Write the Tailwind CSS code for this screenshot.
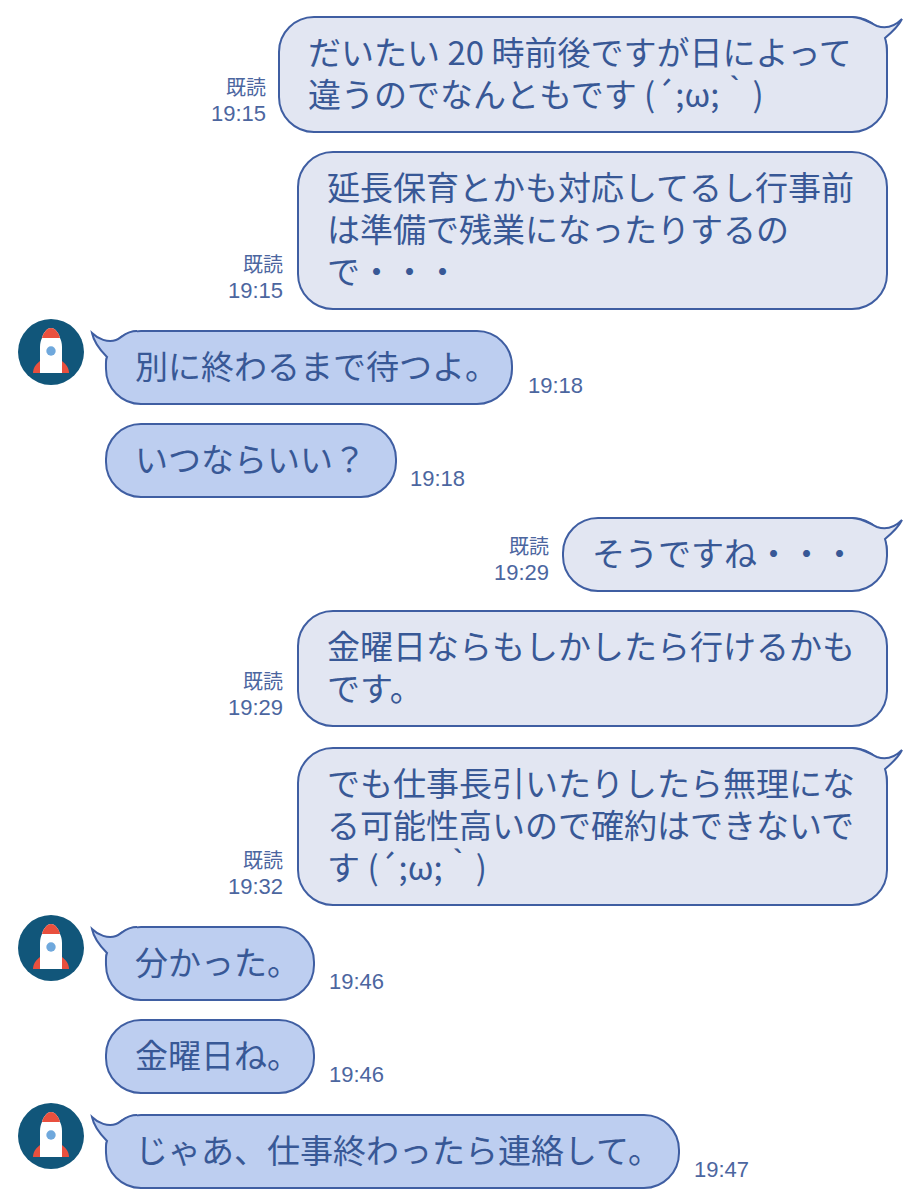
<!DOCTYPE html>
<html lang="ja">
<head>
<meta charset="utf-8">
<title>Chat</title>
<script src="https://cdn.jsdelivr.net/npm/@tailwindcss/browser@4"></script>
</head>
<body class="bg-white">
<main class="w-[916px] h-[1200px] overflow-hidden pt-[16px] font-['Noto_Sans_CJK_JP','Noto_Sans_CJK_SC',sans-serif] text-[33px] leading-[42px] text-[#385896]">

<!-- 1 -->
<div class="flex justify-end items-end gap-[12px] pr-[28px]">
  <div class="mb-[6px] text-right text-[20px] leading-[27px] text-[#4c669f]"><div>既読</div><div class="font-['Liberation_Sans'] text-[22px]">19:15</div></div>
  <div class="relative w-[610px] rounded-[36px] border-2 border-[#3f5ea2] bg-[#e2e6f2] pl-[28px] pr-0 pt-[12px] pb-[17px] whitespace-nowrap">
    <svg class="absolute -right-[22px] -top-[4px]" width="68" height="50" viewBox="0 0 68 50" fill="none"><path d="M12 3C22 3 30 9 37 12C46 15 55 12 62 5C58 13 51 19 45 24C46 27 47 32 47 40L12 40Z" fill="#e2e6f2"/><path d="M12 3C22 3 30 9 37 12C46 15 55 12 62 5C58 13 51 19 45 24C46 27 47 32 47 40" stroke="#3f5ea2" stroke-width="2"/></svg>
    <p class="relative">だいたい 20 時前後ですが日によって<br>違うのでなんともです (´;ω;｀)</p>
  </div>
</div>

<!-- 2 -->
<div class="mt-[18px] flex justify-end items-end gap-[14px] pr-[28px]">
  <div class="mb-[6px] text-right text-[20px] leading-[27px] text-[#4c669f]"><div>既読</div><div class="font-['Liberation_Sans'] text-[22px]">19:15</div></div>
  <div class="w-[591px] rounded-[36px] border-2 border-[#3f5ea2] bg-[#e2e6f2] pl-[28px] pr-0 pt-[12px] pb-[17px] whitespace-nowrap">
    <p>延長保育とかも対応してるし行事前<br>は準備で残業になったりするの<br>で・・・</p>
  </div>
</div>

<!-- 3 -->
<div class="mt-[20px] flex items-start pl-[18px]">
  <svg class="-mt-[11px] mr-[21px] shrink-0" width="66" height="66" viewBox="0 0 66 66"><circle cx="33" cy="33" r="33" fill="#11567a"/><path d="M22 42C18 45 15 49 15 54H51C51 49 48 45 44 42Z" fill="#e9503e"/><path d="M22 54V28C22 24 23 21 24 19C25 14 29 9 33 9C37 9 41 14 42 19C43 21 44 24 44 28V54Z" fill="#fff"/><path d="M24 19C25 14 29 9 33 9C37 9 41 14 42 19Z" fill="#e9503e"/><circle cx="33" cy="32" r="4.700" fill="#6fa8dc"/></svg>
  <div class="relative w-[408px] rounded-[36px] border-2 border-[#3f5ea2] bg-[#bdcef0] pl-[28px] pr-0 pt-[12px] pb-[17px] whitespace-nowrap">
    <svg class="absolute -left-[18px] -top-[3px]" width="60" height="50" viewBox="0 0 60 50" fill="none"><path d="M48 2C36 2 33 9 27 11C19 14 9 10 3 4C5 14 11 21 18 28C16.500 31 17 36 17 40L48 40Z" fill="#bdcef0"/><path d="M48 2C36 2 33 9 27 11C19 14 9 10 3 4C5 14 11 21 18 28C16.500 31 17 36 17 40" stroke="#3f5ea2" stroke-width="2"/></svg>
    <p class="relative">別に終わるまで待つよ。</p>
  </div>
  <div class="ml-[15px] self-end mb-[6px] font-['Liberation_Sans'] text-[22px] leading-[27px] text-[#4c669f]">19:18</div>
</div>

<!-- 4 -->
<div class="mt-[18px] flex items-start pl-[105px]">
  <div class="w-[292px] rounded-[36px] border-2 border-[#3f5ea2] bg-[#bdcef0] pl-[28px] pr-0 pt-[12px] pb-[17px] whitespace-nowrap">
    <p>いつならいい？</p>
  </div>
  <div class="ml-[13px] self-end mb-[6px] font-['Liberation_Sans'] text-[22px] leading-[27px] text-[#4c669f]">19:18</div>
</div>

<!-- 5 -->
<div class="mt-[19px] flex justify-end items-end gap-[13px] pr-[28px]">
  <div class="mb-[6px] text-right text-[20px] leading-[27px] text-[#4c669f]"><div>既読</div><div class="font-['Liberation_Sans'] text-[22px]">19:29</div></div>
  <div class="relative w-[326px] rounded-[36px] border-2 border-[#3f5ea2] bg-[#e2e6f2] pl-[28px] pr-0 pt-[12px] pb-[17px] whitespace-nowrap">
    <svg class="absolute -right-[22px] -top-[4px]" width="68" height="50" viewBox="0 0 68 50" fill="none"><path d="M12 3C22 3 30 9 37 12C46 15 55 12 62 5C58 13 51 19 45 24C46 27 47 32 47 40L12 40Z" fill="#e2e6f2"/><path d="M12 3C22 3 30 9 37 12C46 15 55 12 62 5C58 13 51 19 45 24C46 27 47 32 47 40" stroke="#3f5ea2" stroke-width="2"/></svg>
    <p class="relative">そうですね・・・</p>
  </div>
</div>

<!-- 6 -->
<div class="mt-[18px] flex justify-end items-end gap-[14px] pr-[28px]">
  <div class="mb-[6px] text-right text-[20px] leading-[27px] text-[#4c669f]"><div>既読</div><div class="font-['Liberation_Sans'] text-[22px]">19:29</div></div>
  <div class="w-[591px] rounded-[36px] border-2 border-[#3f5ea2] bg-[#e2e6f2] pl-[28px] pr-0 pt-[12px] pb-[17px] whitespace-nowrap">
    <p>金曜日ならもしかしたら行けるかも<br>です。</p>
  </div>
</div>

<!-- 7 -->
<div class="mt-[20px] flex justify-end items-end gap-[14px] pr-[28px]">
  <div class="mb-[6px] text-right text-[20px] leading-[27px] text-[#4c669f]"><div>既読</div><div class="font-['Liberation_Sans'] text-[22px]">19:32</div></div>
  <div class="relative w-[591px] rounded-[36px] border-2 border-[#3f5ea2] bg-[#e2e6f2] pl-[28px] pr-0 pt-[12px] pb-[17px] whitespace-nowrap">
    <svg class="absolute -right-[22px] -top-[4px]" width="68" height="50" viewBox="0 0 68 50" fill="none"><path d="M12 3C22 3 30 9 37 12C46 15 55 12 62 5C58 13 51 19 45 24C46 27 47 32 47 40L12 40Z" fill="#e2e6f2"/><path d="M12 3C22 3 30 9 37 12C46 15 55 12 62 5C58 13 51 19 45 24C46 27 47 32 47 40" stroke="#3f5ea2" stroke-width="2"/></svg>
    <p class="relative">でも仕事長引いたりしたら無理にな<br>る可能性高いので確約はできないで<br>す (´;ω;｀)</p>
  </div>
</div>

<!-- 8 -->
<div class="mt-[20px] flex items-start pl-[18px]">
  <svg class="-mt-[11px] mr-[21px] shrink-0" width="66" height="66" viewBox="0 0 66 66"><circle cx="33" cy="33" r="33" fill="#11567a"/><path d="M22 42C18 45 15 49 15 54H51C51 49 48 45 44 42Z" fill="#e9503e"/><path d="M22 54V28C22 24 23 21 24 19C25 14 29 9 33 9C37 9 41 14 42 19C43 21 44 24 44 28V54Z" fill="#fff"/><path d="M24 19C25 14 29 9 33 9C37 9 41 14 42 19Z" fill="#e9503e"/><circle cx="33" cy="32" r="4.700" fill="#6fa8dc"/></svg>
  <div class="relative w-[210px] rounded-[36px] border-2 border-[#3f5ea2] bg-[#bdcef0] pl-[28px] pr-0 pt-[12px] pb-[17px] whitespace-nowrap">
    <svg class="absolute -left-[18px] -top-[3px]" width="60" height="50" viewBox="0 0 60 50" fill="none"><path d="M48 2C36 2 33 9 27 11C19 14 9 10 3 4C5 14 11 21 18 28C16.500 31 17 36 17 40L48 40Z" fill="#bdcef0"/><path d="M48 2C36 2 33 9 27 11C19 14 9 10 3 4C5 14 11 21 18 28C16.500 31 17 36 17 40" stroke="#3f5ea2" stroke-width="2"/></svg>
    <p class="relative">分かった。</p>
  </div>
  <div class="ml-[14px] self-end mb-[6px] font-['Liberation_Sans'] text-[22px] leading-[27px] text-[#4c669f]">19:46</div>
</div>

<!-- 9 -->
<div class="mt-[18px] flex items-start pl-[105px]">
  <div class="w-[210px] rounded-[36px] border-2 border-[#3f5ea2] bg-[#bdcef0] pl-[28px] pr-0 pt-[12px] pb-[17px] whitespace-nowrap">
    <p>金曜日ね。</p>
  </div>
  <div class="ml-[14px] self-end mb-[6px] font-['Liberation_Sans'] text-[22px] leading-[27px] text-[#4c669f]">19:46</div>
</div>

<!-- 10 -->
<div class="mt-[20px] flex items-start pl-[18px]">
  <svg class="-mt-[11px] mr-[21px] shrink-0" width="66" height="66" viewBox="0 0 66 66"><circle cx="33" cy="33" r="33" fill="#11567a"/><path d="M22 42C18 45 15 49 15 54H51C51 49 48 45 44 42Z" fill="#e9503e"/><path d="M22 54V28C22 24 23 21 24 19C25 14 29 9 33 9C37 9 41 14 42 19C43 21 44 24 44 28V54Z" fill="#fff"/><path d="M24 19C25 14 29 9 33 9C37 9 41 14 42 19Z" fill="#e9503e"/><circle cx="33" cy="32" r="4.700" fill="#6fa8dc"/></svg>
  <div class="relative w-[575px] rounded-[36px] border-2 border-[#3f5ea2] bg-[#bdcef0] pl-[28px] pr-0 pt-[12px] pb-[17px] whitespace-nowrap">
    <svg class="absolute -left-[18px] -top-[3px]" width="60" height="50" viewBox="0 0 60 50" fill="none"><path d="M48 2C36 2 33 9 27 11C19 14 9 10 3 4C5 14 11 21 18 28C16.500 31 17 36 17 40L48 40Z" fill="#bdcef0"/><path d="M48 2C36 2 33 9 27 11C19 14 9 10 3 4C5 14 11 21 18 28C16.500 31 17 36 17 40" stroke="#3f5ea2" stroke-width="2"/></svg>
    <p class="relative">じゃあ、仕事終わったら連絡して。</p>
  </div>
  <div class="ml-[14px] self-end mb-[6px] font-['Liberation_Sans'] text-[22px] leading-[27px] text-[#4c669f]">19:47</div>
</div>

</main>
</body>
</html>
